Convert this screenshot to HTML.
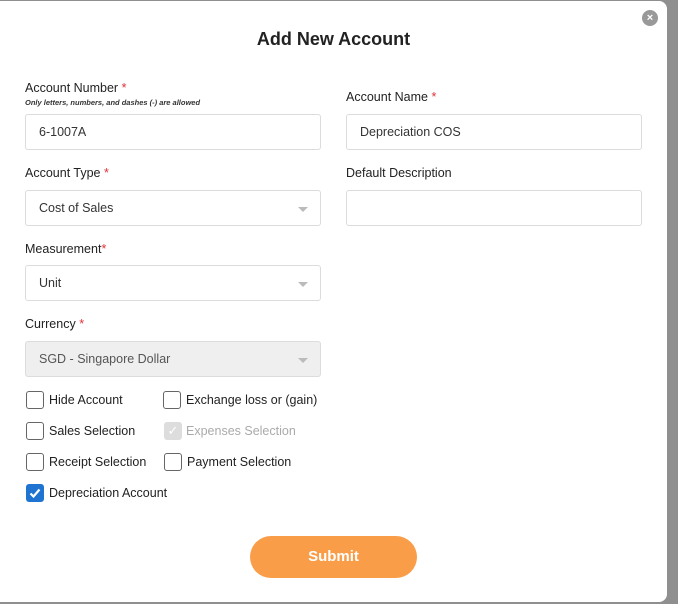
<!DOCTYPE html>
<html><head><style>
*{box-sizing:border-box;margin:0;padding:0}
body{width:678px;height:604px;background:#8f8f8f;font-family:"Liberation Sans",sans-serif;position:relative;overflow:hidden;color:#222}
.modal{position:absolute;left:0;top:1px;width:667px;height:601px;background:#fff;border-radius:0 8px 8px 0}
.t{position:absolute;left:0;width:667px;top:28px;text-align:center;font-size:18px;font-weight:bold;color:#222}
.lbl{position:absolute;font-size:12.5px;color:#222}
.lbl b{color:#e0303a;font-weight:normal}
.hint{position:absolute;left:25px;top:97px;font-size:7.5px;font-style:italic;font-weight:bold;color:#333}
.in{position:absolute;height:36px;border:1px solid #dcdcdc;border-radius:3px;font-size:12.5px;color:#333;padding:0 13px;line-height:34px}
.sel::after{content:"";position:absolute;right:12px;top:16px;border:5px solid transparent;border-top:5px solid #bbb;border-bottom:0}
.dis{background:#efefef;color:#555}
.cb{position:absolute;width:18px;height:18px;border:1px solid #666;border-radius:3px;background:#fff}
.cl{position:absolute;font-size:12.5px;color:#222}
.btn{position:absolute;left:250px;top:535px;width:167px;height:42px;border-radius:21px;background:#f99d48;color:#fff;font-weight:bold;font-size:15px;text-align:center;line-height:42px}
.x{position:absolute;left:642px;top:9px;width:16px;height:16px;border-radius:50%;background:#999;color:#fff;font-size:11px;line-height:16px;text-align:center;font-weight:bold}
</style></head><body>
<div class="modal">
<div class="x">×</div>
<div class="t">Add New Account</div>
<div class="lbl" style="left:25px;top:80px">Account Number <b>*</b></div>
<div class="hint">Only letters, numbers, and dashes (-) are allowed</div>
<div class="lbl" style="left:346px;top:89px">Account Name <b>*</b></div>
<div class="in" style="left:25px;top:113px;width:296px">6-1007A</div>
<div class="in" style="left:346px;top:113px;width:296px">Depreciation COS</div>
<div class="lbl" style="left:25px;top:165px">Account Type <b>*</b></div>
<div class="lbl" style="left:346px;top:165px">Default Description</div>
<div class="in sel" style="left:25px;top:189px;width:296px">Cost of Sales</div>
<div class="in" style="left:346px;top:189px;width:296px"></div>
<div class="lbl" style="left:25px;top:241px">Measurement<b>*</b></div>
<div class="in sel" style="left:25px;top:264px;width:296px">Unit</div>
<div class="lbl" style="left:25px;top:316px">Currency <b>*</b></div>
<div class="in sel dis" style="left:25px;top:340px;width:296px">SGD - Singapore Dollar</div>

<div class="cb" style="left:26px;top:390px"></div><div class="cl" style="left:49px;top:392px">Hide Account</div>
<div class="cb" style="left:163px;top:390px"></div><div class="cl" style="left:186px;top:392px">Exchange loss or (gain)</div>
<div class="cb" style="left:26px;top:421px"></div><div class="cl" style="left:49px;top:423px">Sales Selection</div>
<div class="cb" style="left:164px;top:421px;background:#ddd;border-color:#ddd;color:#fff;font-size:13px;text-align:center;line-height:16px">✓</div><div class="cl" style="left:186px;top:423px;color:#aaa">Expenses Selection</div>
<div class="cb" style="left:26px;top:452px"></div><div class="cl" style="left:49px;top:454px">Receipt Selection</div>
<div class="cb" style="left:164px;top:452px"></div><div class="cl" style="left:187px;top:454px">Payment Selection</div>
<div class="cb" style="left:26px;top:483px;background:#1f74d2;border-color:#1f74d2">
<svg width="16" height="16" viewBox="0 0 16 16"><path d="M3.5 8.5l3 3 6-7" stroke="#fff" stroke-width="2.2" fill="none"/></svg></div>
<div class="cl" style="left:49px;top:485px">Depreciation Account</div>
<div class="btn">Submit</div>
</div>
</body></html>
